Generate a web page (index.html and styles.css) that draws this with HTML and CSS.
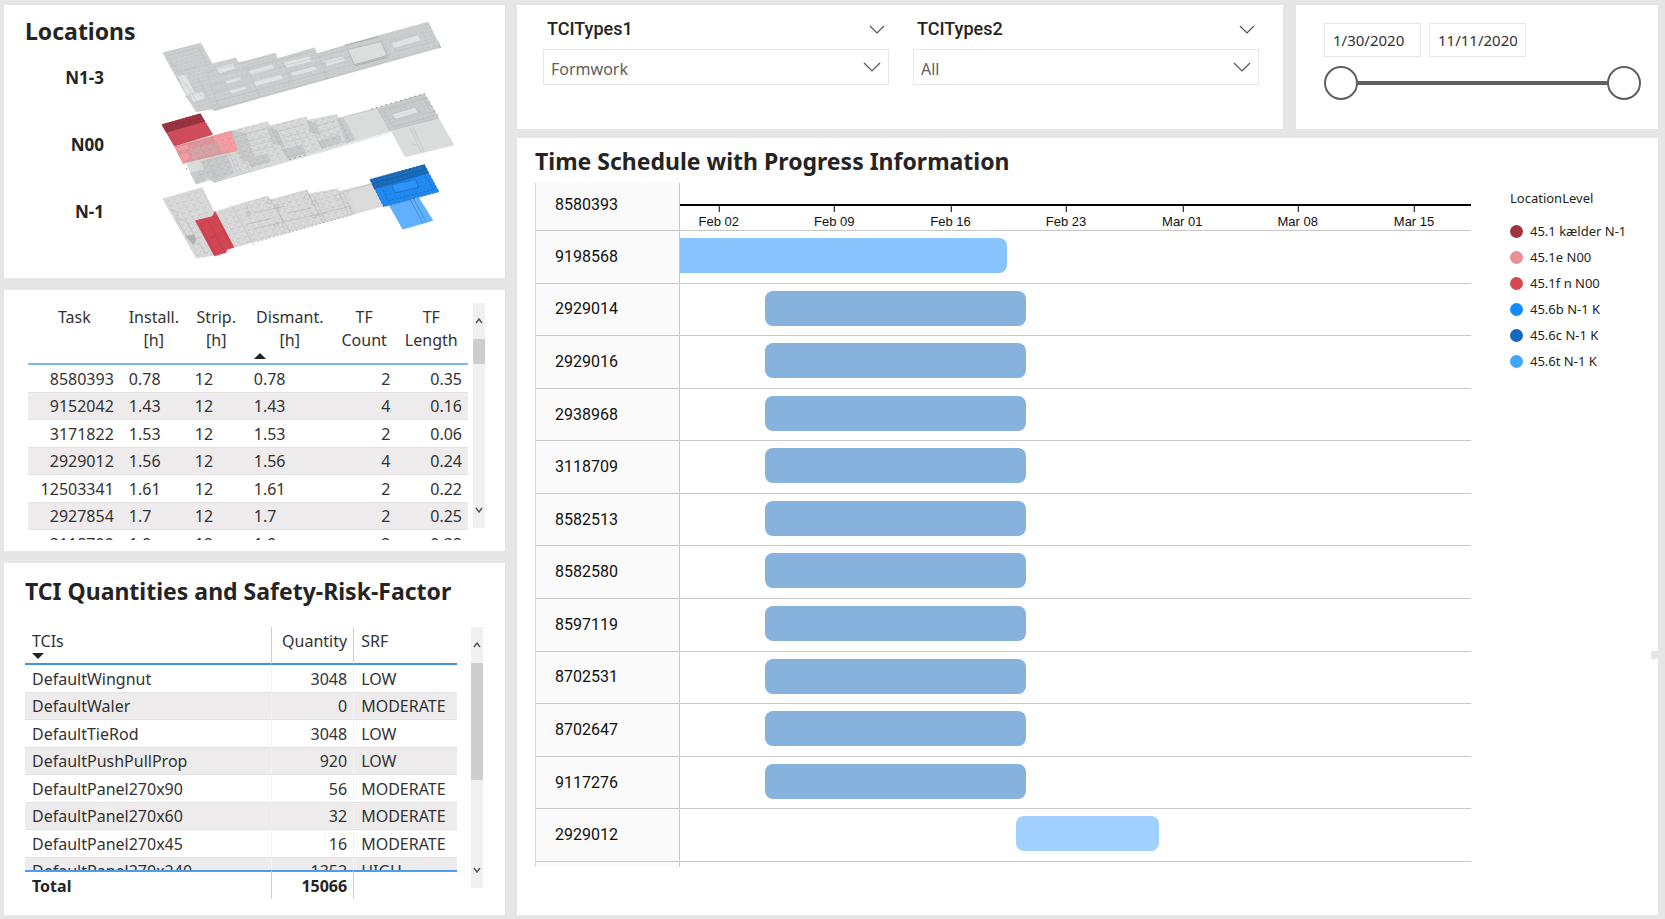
FILE: index.html
```html
<!DOCTYPE html>
<html lang="en">
<head>
<meta charset="utf-8">
<title>Formwork schedule dashboard</title>
<link rel="stylesheet" href="styles.css">
</head>
<body>
<main class="page">
  <div class="side">
    <section class="panel locations">
      <div class="loc-text">
        <h2 class="title">Locations</h2>
        <ul class="levels">
          <li>N1-3</li>
          <li>N00</li>
          <li>N-1</li>
        </ul>
      </div>
      <svg class="plans" viewBox="450 60 930 729" role="img" aria-label="Building levels">
        <defs>
          <pattern id="rooms" width="21" height="17" patternUnits="userSpaceOnUse" patternTransform="matrix(1 -0.27 0.5 0.87 0 0)">
            <path d="M0 3H14M4 3V9M11 3V7M0 13H6M17 9V16" fill="none" stroke="#777" stroke-opacity=".3" stroke-width="1.5"/>
          </pattern>
          <pattern id="fine" width="15" height="23" patternUnits="userSpaceOnUse" patternTransform="matrix(1 -0.27 0.5 0.87 0 0)">
            <path d="M0 4H10M3 4V10M0 15H15M9 15V20" fill="none" stroke="#8d9496" stroke-opacity=".26" stroke-width="1.4"/>
          </pattern>
        </defs>

        <g class="level-top">
          <path fill="#cccfd0" d="M484 159L600 130L634 192L705 174L713 189L824 160L830 176L940 144L948 161L1130 108L1282 67L1320 144L640 335L633 329L585 338L556 290Z"/>
          <path fill="url(#fine)" d="M484 159L600 130L634 192L705 174L713 189L824 160L830 176L940 144L948 161L1130 108L1282 67L1320 144L640 335L633 329L585 338L556 290Z"/>
          <g fill="#e1e2e2">
            <path d="M646 206L695 192L703 207L657 221ZM742 215L812 196L820 207L750 228ZM848 189L925 171L932 185L857 204ZM970 185L1026 170L1032 184L978 199ZM671 244L715 232L720 240L680 252ZM757 246L838 225L846 238L766 259ZM869 219L940 200L948 210L878 229ZM684 274L732 262L738 268L692 281ZM1170 132L1250 108L1259 122L1180 145Z"/>
            <path d="M532 230L555 225L580 280L556 288ZM566 287L605 277L612 298L578 307Z"/>
          </g>
          <path fill="#dcdddd" stroke="#b7b9ba" stroke-width="3" d="M1040 150L1140 126L1158 168L1060 196Z"/>
          <g fill="none" stroke="#b2b7b9" stroke-opacity=".5" stroke-width="2">
            <path d="M622 215L735 187M625 232L960 150M632 255L1035 151M642 277L1060 168M645 306L1163 168M640 331L1318 142M1032 137L1132 112L1163 174L1062 200ZM1138 108L1166 170M1165 124L1265 98L1280 132L1185 155ZM1272 72L1305 138M500 168L592 144L622 205M505 176L555 260M520 190L610 300M540 215L588 200M556 255L600 330M590 235L635 325M615 215L655 330M738 196L775 290M840 172L880 268M950 161L980 240M862 240L870 268M968 212L978 240"/>
          </g>
          <path fill="none" stroke="#a9acad" stroke-width="3" d="M1032 137L1132 112M1064 198L1160 173"/>
          <path fill="none" stroke="#555" stroke-width="2.5" stroke-dasharray="3 5" d="M1312 130L1319 144L1314 147M556 290L562 297"/>
        </g>

        <g class="level-middle">
          <path fill="#dadbdb" d="M545 470L690 393L800 365L806 378L915 351L921 361L1007 344L1013 355L1130 324L1270 282L1314 356L1360 437L1212 473L1170 395L640 549L628 542L585 556Z"/>
          <path fill="#c9cccd" d="M1127 326L1270 282L1314 356L1166 394ZM600 485L680 465L700 520L640 549L618 535ZM690 394L735 400L760 470L725 490L700 440ZM795 382L828 390L850 440L815 432ZM918 362L945 370L960 405L925 400ZM1006 356L1028 352L1064 420L1036 432ZM735 478L800 462L810 486L752 504ZM840 450L905 434L914 462L862 476ZM950 424L1015 406L1024 430L962 448ZM566 520L610 510L616 540L585 554Z"/>
          <path fill="url(#rooms)" d="M600 470L690 393L800 365L806 378L915 351L921 361L1007 344L1060 420L640 549L628 542L585 556Z"/>
          <path fill="url(#fine)" d="M1127 326L1270 282L1314 356L1166 394Z"/>
          <path fill="#e0e1e1" stroke="#b6baba" stroke-width="2" d="M1172 344L1242 323L1252 340L1184 359Z"/>
          <g fill="none" stroke="#a9adae" stroke-opacity=".5" stroke-width="2">
            <path d="M708 410L792 388M738 426L792 412M740 442L812 424M745 458L820 440M830 397L915 375M846 414L915 397M850 430L925 410M950 378L1002 364M958 398L1000 386M970 414L1018 400M604 486L686 464L708 520M620 486L650 546M700 470L722 520M718 450L745 515M806 378L862 478M825 395L865 475M921 361L965 446M940 380L975 442M1013 355L1045 425M1030 352L1130 326M1130 328L1166 394L1312 356M1144 336L1268 298L1298 350L1178 382ZM1228 386L1262 460M1236 384L1270 458M1232 438L1248 434M740 500L800 484M860 475L918 458M640 548L1166 400"/>
          </g>
          <path fill="none" stroke="#555" stroke-opacity=".7" stroke-width="2.5" stroke-dasharray="5 10" d="M1110 329L1270 282L1314 356M865 480L920 464M548 492L558 510"/>
          <path fill="#d24a59" d="M482 375L598 342L636 406L520 441Z"/>
          <path fill="#9b2f3d" d="M482 375L598 342L612 366L496 400Z"/>
          <path fill="#e0959c" d="M520 441L690 394L711 454L545 492Z"/>
          <path fill="#f79da3" d="M636 410L690 394L711 454L660 460ZM524 444L556 436L563 448L534 456ZM532 468L562 460L566 476L548 490Z"/>
          <path fill="#d6a3a8" d="M565 448L650 426L660 458L574 482Z"/>
          <path fill="url(#rooms)" d="M482 375L598 342L636 406L690 394L711 454L545 492Z"/>
          <path fill="none" stroke="#8f2a38" stroke-width="2" stroke-dasharray="6 4" stroke-opacity=".8" d="M484 375L598 343L634 404M486 380L520 438M494 384L600 355"/>
        </g>

        <g class="level-bottom">
          <path fill="#dbdbdb" d="M484 597L604 563L640 637L800 588L807 600L917 570L924 582L1008 567L1014 575L1120 548L1148 620L700 745L640 768L585 777Z"/>
          <path fill="url(#rooms)" d="M484 597L604 563L640 637L800 588L807 600L917 570L924 582L1008 567L1040 574L1064 640L700 745L640 768L585 777Z"/>
          <g fill="none" stroke="#a3a6a7" stroke-opacity=".6" stroke-width="2">
            <path d="M505 630L530 640L528 656L556 664L582 712M525 658L568 725M556 712L578 706L584 716L600 714M566 724L600 738L612 760M690 616L760 740M735 610L745 650M800 590L870 700M830 620L850 690M917 572L965 670M940 590L972 662M1012 574L1044 650M1024 572L1056 646M738 674L812 656M755 690L1050 620M860 640L930 626M760 640L850 620M1030 576L1118 552M940 650L980 640"/>
            <circle cx="742" cy="643" r="7"/><circle cx="805" cy="606" r="7"/><circle cx="828" cy="620" r="7"/><circle cx="918" cy="592" r="8"/><circle cx="938" cy="610" r="7"/><circle cx="1012" cy="592" r="8"/><circle cx="938" cy="650" r="6"/><circle cx="826" cy="676" r="7"/>
          </g>
          <path fill="#aeb1b2" d="M554 710L578 706L586 722L576 736Z"/>
          <path fill="none" stroke="#999" stroke-width="2" stroke-dasharray="5 7" d="M770 726L1060 644"/>
          <path fill="#d24553" d="M582 663L634 650L642 634L700 744L678 750L676 760L640 770Z"/>
          <path fill="none" stroke="#98303d" stroke-width="2" stroke-opacity=".45" d="M634 650L650 654L690 742M596 668L640 762M620 664L668 752M628 714L644 710"/>
          <path fill="#60b0ff" d="M1163 616L1254 594L1297 664L1205 690Z"/>
          <path fill="none" stroke="#4489cc" stroke-width="2.5" d="M1228 600L1266 672M1238 598L1276 668"/>
          <path fill="#1b88f4" d="M1107 540L1270 495L1314 577L1148 622Z"/>
          <path fill="#1668ba" d="M1107 540L1270 495L1283 521L1120 570Z"/>
          <path fill="url(#fine)" d="M1107 540L1270 495L1314 577L1148 622Z"/>
          <path fill="#2f94f8" stroke="#1466b6" stroke-width="2" d="M1172 556L1244 540L1252 564L1182 580Z"/>
          <path fill="none" stroke="#155da5" stroke-width="2" stroke-dasharray="7 5" d="M1107 540L1270 495L1314 577L1148 622ZM1116 550L1262 512L1272 498M1262 512L1300 572M1142 560L1160 604L1298 570"/>
        </g>
      </svg>
    </section>

    <section class="panel tasks">
      <div class="viewport">
        <table class="grid task-table">
          <colgroup><col class="c-task"><col class="c-inst"><col class="c-strip"><col class="c-dis"><col class="c-count"><col class="c-len"></colgroup>
          <thead>
            <tr>
              <th scope="col">Task</th>
              <th scope="col">Install.<br>[h]</th>
              <th scope="col">Strip.<br>[h]</th>
              <th scope="col" aria-sort="ascending">Dismant.<br>[h]<svg class="sort" viewBox="0 0 12 6"><path d="M0 6L6 0L12 6Z"/></svg></th>
              <th scope="col">TF<br>Count</th>
              <th scope="col">TF<br>Length</th>
            </tr>
          </thead>
          <tbody>
            <tr><td>8580393</td><td>0.78</td><td>12</td><td>0.78</td><td>2</td><td>0.35</td></tr>
            <tr><td>9152042</td><td>1.43</td><td>12</td><td>1.43</td><td>4</td><td>0.16</td></tr>
            <tr><td>3171822</td><td>1.53</td><td>12</td><td>1.53</td><td>2</td><td>0.06</td></tr>
            <tr><td>2929012</td><td>1.56</td><td>12</td><td>1.56</td><td>4</td><td>0.24</td></tr>
            <tr><td>12503341</td><td>1.61</td><td>12</td><td>1.61</td><td>2</td><td>0.22</td></tr>
            <tr><td>2927854</td><td>1.7</td><td>12</td><td>1.7</td><td>2</td><td>0.25</td></tr>
            <tr><td>3118709</td><td>1.9</td><td>12</td><td>1.9</td><td>2</td><td>0.38</td></tr>
          </tbody>
        </table>
      </div>
      <div class="scrollbar task-scroll">
        <button class="arrow" aria-label="Scroll up"><svg viewBox="0 0 8 6"><path d="M1 5L4 1L7 5"/></svg></button>
        <span class="thumb"></span>
        <button class="arrow" aria-label="Scroll down"><svg viewBox="0 0 8 6"><path d="M1 1L4 5L7 1"/></svg></button>
      </div>
    </section>

    <section class="panel quantities">
      <h2 class="title">TCI Quantities and Safety-Risk-Factor</h2>
      <div class="qty-body">
        <div class="viewport">
          <table class="grid qty-table">
            <colgroup><col class="c-tci"><col class="c-qty"><col class="c-srf"></colgroup>
            <thead>
              <tr>
                <th scope="col" aria-sort="descending">TCIs<svg class="sort" viewBox="0 0 12 6"><path d="M0 0L6 6L12 0Z"/></svg></th>
                <th scope="col">Quantity</th>
                <th scope="col">SRF</th>
              </tr>
            </thead>
            <tbody>
              <tr><td>DefaultWingnut</td><td>3048</td><td>LOW</td></tr>
              <tr><td>DefaultWaler</td><td>0</td><td>MODERATE</td></tr>
              <tr><td>DefaultTieRod</td><td>3048</td><td>LOW</td></tr>
              <tr><td>DefaultPushPullProp</td><td>920</td><td>LOW</td></tr>
              <tr><td>DefaultPanel270x90</td><td>56</td><td>MODERATE</td></tr>
              <tr><td>DefaultPanel270x60</td><td>32</td><td>MODERATE</td></tr>
              <tr><td>DefaultPanel270x45</td><td>16</td><td>MODERATE</td></tr>
              <tr><td>DefaultPanel270x240</td><td>1352</td><td>HIGH</td></tr>
            </tbody>
            <tfoot>
              <tr><td>Total</td><td>15066</td><td></td></tr>
            </tfoot>
          </table>
        </div>
        <div class="scrollbar qty-scroll">
          <button class="arrow" aria-label="Scroll up"><svg viewBox="0 0 8 6"><path d="M1 5L4 1L7 5"/></svg></button>
          <span class="thumb"></span>
          <button class="arrow" aria-label="Scroll down"><svg viewBox="0 0 8 6"><path d="M1 1L4 5L7 1"/></svg></button>
        </div>
      </div>
    </section>
  </div>

  <div class="content">
    <div class="filters">
      <section class="panel types">
        <div class="slicer">
          <div class="slicer-head">
            <label for="t1">TCITypes1</label>
            <button class="toggle" aria-label="Collapse TCITypes1"><svg viewBox="0 0 16 9"><path d="M1 1L8 8L15 1"/></svg></button>
          </div>
          <div class="select-box">
            <select id="t1"><option>Formwork</option></select>
            <svg viewBox="0 0 18 10"><path d="M1 1L9 9L17 1"/></svg>
          </div>
        </div>
        <div class="slicer">
          <div class="slicer-head">
            <label for="t2">TCITypes2</label>
            <button class="toggle" aria-label="Collapse TCITypes2"><svg viewBox="0 0 16 9"><path d="M1 1L8 8L15 1"/></svg></button>
          </div>
          <div class="select-box">
            <select id="t2"><option>All</option></select>
            <svg viewBox="0 0 18 10"><path d="M1 1L9 9L17 1"/></svg>
          </div>
        </div>
      </section>
      <section class="panel dates">
        <div class="date-row">
          <input type="text" aria-label="Start date" value="1/30/2020">
          <input type="text" aria-label="End date" value="11/11/2020">
        </div>
        <div class="range">
          <input type="range" aria-label="Range start" min="0" max="100" value="0">
          <input type="range" aria-label="Range end" min="0" max="100" value="100">
        </div>
      </section>
    </div>

    <section class="panel schedule">
      <h2 class="title">Time Schedule with Progress Information</h2>
      <div class="chart-area">
        <div class="gantt">
          <div class="row axis-row">
            <span class="id">8580393</span>
            <div class="axis">
              <span class="tick" style="left:4.9%">Feb 02</span>
              <span class="tick" style="left:19.5%">Feb 09</span>
              <span class="tick" style="left:34.2%">Feb 16</span>
              <span class="tick" style="left:48.8%">Feb 23</span>
              <span class="tick" style="left:63.5%">Mar 01</span>
              <span class="tick" style="left:78.1%">Mar 08</span>
              <span class="tick" style="left:92.8%">Mar 15</span>
            </div>
          </div>
          <div class="row"><span class="id">9198568</span><div class="lane"><div class="bar started" style="width:41.4%"></div></div></div>
          <div class="row"><span class="id">2929014</span><div class="lane"><div class="bar" style="margin-left:10.8%;width:32.9%"></div></div></div>
          <div class="row"><span class="id">2929016</span><div class="lane"><div class="bar" style="margin-left:10.8%;width:32.9%"></div></div></div>
          <div class="row"><span class="id">2938968</span><div class="lane"><div class="bar" style="margin-left:10.8%;width:32.9%"></div></div></div>
          <div class="row"><span class="id">3118709</span><div class="lane"><div class="bar" style="margin-left:10.8%;width:32.9%"></div></div></div>
          <div class="row"><span class="id">8582513</span><div class="lane"><div class="bar" style="margin-left:10.8%;width:32.9%"></div></div></div>
          <div class="row"><span class="id">8582580</span><div class="lane"><div class="bar" style="margin-left:10.8%;width:32.9%"></div></div></div>
          <div class="row"><span class="id">8597119</span><div class="lane"><div class="bar" style="margin-left:10.8%;width:32.9%"></div></div></div>
          <div class="row"><span class="id">8702531</span><div class="lane"><div class="bar" style="margin-left:10.8%;width:32.9%"></div></div></div>
          <div class="row"><span class="id">8702647</span><div class="lane"><div class="bar" style="margin-left:10.8%;width:32.9%"></div></div></div>
          <div class="row"><span class="id">9117276</span><div class="lane"><div class="bar" style="margin-left:10.8%;width:32.9%"></div></div></div>
          <div class="row"><span class="id">2929012</span><div class="lane"><div class="bar planned" style="margin-left:42.5%;width:18%"></div></div></div>
          <div class="row tail"><span class="id"></span></div>
        </div>
        <aside class="legend">
          <h3>LocationLevel</h3>
          <ul>
            <li><i class="dot maroon"></i>45.1 kælder N-1</li>
            <li><i class="dot pink"></i>45.1e N00</li>
            <li><i class="dot red"></i>45.1f n N00</li>
            <li><i class="dot blue"></i>45.6b N-1 K</li>
            <li><i class="dot navy"></i>45.6c N-1 K</li>
            <li><i class="dot sky"></i>45.6t N-1 K</li>
          </ul>
        </aside>
      </div>
    </section>
  </div>
</main>
</body>
</html>
```
FILE: styles.css
```css
* { box-sizing: border-box; }

body {
  margin: 0;
  background: #e6e6e6;
  color: #333;
  font: 16px/22px "Noto Sans", "Open Sans", sans-serif;
}

h2, h3, ul { margin: 0; padding: 0; list-style: none; }

button {
  display: flex;
  align-items: center;
  justify-content: center;
  margin: 0;
  padding: 0;
  border: 0;
  background: none;
}

.page {
  display: grid;
  grid-template-columns: 501px minmax(0, 1fr);
  gap: 12px;
  height: 100vh;
  min-height: 760px;
  padding: 5px 7px 4px 4px;
}

.side {
  display: grid;
  grid-template-rows: 273fr 261fr 352fr;
  gap: 12px;
  min-height: 0;
}

.panel { min-width: 0; min-height: 0; background: #fff; }

.title {
  color: #252423;
  font: bold 23px/26px "Noto Sans", "Open Sans", sans-serif;
  white-space: nowrap;
}

/* Locations */
.locations { display: flex; padding: 13px 44px 0 21px; }
.loc-text { width: 126px; }
.levels { padding-right: 47px; }
.levels li {
  color: #252423;
  font-size: 17px;
  font-weight: bold;
  line-height: 67px;
  text-align: right;
}
.plans { flex: 1; min-width: 0; height: 246px; }

/* Tables */
.viewport { flex: 1; min-width: 0; overflow: hidden; }
.grid {
  width: 100%;
  table-layout: fixed;
  border-collapse: separate;
  border-spacing: 0;
}
.grid th { position: relative; font-weight: normal; vertical-align: top; }
.grid td { height: 27px; padding: 0 8px; line-height: 26px; white-space: nowrap; }
.grid tbody tr:nth-child(even) td {
  height: 28px;
  border-top: 1px solid #e4e2e2;
  border-bottom: 1px solid #e4e2e2;
  background: #edebec;
}
.sort { position: absolute; width: 12px; height: 6px; fill: #222; }

.tasks { display: flex; gap: 5px; padding: 13px 20px 11px 24px; }
.task-table th { height: 62px; padding: 3px 0 0; border-bottom: 2px solid #7fb6ea; line-height: 23px; }
.task-table td { text-align: left; }
.task-table td:first-child { padding: 0 7px 0 0; text-align: right; }
.task-table td:nth-child(5) { padding: 0 4px; text-align: right; }
.task-table td:nth-child(6) { padding: 0 6px; text-align: right; }
.task-table .sort { bottom: 4px; left: 8px; }
.c-task { width: 21.1%; }
.c-inst { width: 15%; }
.c-strip { width: 13.4%; }
.c-dis { width: 20%; }
.c-count { width: 13.8%; }
.c-len { width: 16.7%; }

.quantities { display: flex; flex-direction: column; gap: 23px; padding: 15px 22px 16px 21px; }
.qty-body { display: flex; flex: 1; gap: 14px; min-height: 0; }
.qty-table th { height: 38px; padding: 3px 7px 0; border-bottom: 2px solid #3d94dd; text-align: left; }
.qty-table td { padding: 0 7px; }
.qty-table th:nth-child(2), .qty-table td:nth-child(2) {
  padding-right: 6px;
  border-right: 1px solid #edf3f8;
  border-left: 1px solid #edf3f8;
  text-align: right;
}
.qty-table th:nth-child(2), .qty-table tfoot td:nth-child(2) {
  border-right-color: #b3d8f6;
  border-left-color: #b3d8f6;
}
.qty-table tfoot td {
  position: sticky;
  bottom: 0;
  height: 29px;
  border-top: 2px solid #4b9fea;
  background: #fff;
  color: #252423;
  font-weight: bold;
}
.qty-table .sort { bottom: 4px; left: 7px; }
.c-tci { width: 57%; }
.c-qty { width: 19.2%; }
.c-srf { width: 23.8%; }

.scrollbar { display: flex; flex-direction: column; width: 12px; background: #f0f0f0; }
.scrollbar .arrow { height: 36px; }
.scrollbar .arrow svg { width: 8px; height: 6px; fill: none; stroke: #555; stroke-width: 1.5; }
.scrollbar .arrow:last-child { margin-top: auto; }
.scrollbar .thumb { background: #cdcdcd; }
.task-scroll { margin-bottom: 12px; }
.task-scroll .thumb { height: 11%; }
.qty-scroll { margin-bottom: 11px; }
.qty-scroll .thumb { height: 45%; }

/* Filters */
.content { display: grid; grid-template-rows: 124px minmax(0, 1fr); gap: 9px; min-width: 0; min-height: 0; }
.filters { display: grid; grid-template-columns: minmax(0, 766fr) minmax(0, 362fr); gap: 13px; }
.types { display: grid; grid-template-columns: 1fr 1fr; gap: 24px; padding: 12px 24px 0 26px; }
.slicer { display: flex; flex-direction: column; gap: 8px; min-width: 0; }
.slicer-head { display: flex; align-items: center; justify-content: space-between; padding: 0 4px; }
.slicer-head label { color: #252423; font: 500 18px/24px Roboto, sans-serif; }
.toggle svg { width: 16px; height: 9px; }
.toggle svg, .select-box svg { fill: none; stroke: #555; stroke-width: 1.2; }
.select-box { position: relative; }
.select-box select {
  width: 100%;
  height: 36px;
  padding: 4px 7px 0;
  border: 1px solid #e6e6e6;
  border-radius: 0;
  background: #fff;
  color: #605e5c;
  font: inherit;
  appearance: none;
}
.select-box svg { position: absolute; top: 13px; right: 8px; width: 18px; height: 10px; pointer-events: none; }

.dates { display: flex; flex-direction: column; gap: 9px; padding: 18px 17px 0 28px; }
.date-row { display: flex; gap: 8px; }
.date-row input {
  width: 97px;
  height: 34px;
  padding: 0 8px;
  border: 1px solid #e6e6e6;
  color: #333;
  font: 15px/20px "Noto Sans", "Open Sans", sans-serif;
}
.range { position: relative; height: 34px; }
.range::before {
  content: "";
  position: absolute;
  top: 15px;
  right: 17px;
  left: 17px;
  height: 4px;
  background: #606060;
}
.range input {
  position: absolute;
  width: 100%;
  height: 34px;
  margin: 0;
  background: none;
  pointer-events: none;
  appearance: none;
}
.range input::-webkit-slider-thumb {
  width: 34px;
  height: 34px;
  border: 2px solid #606060;
  border-radius: 50%;
  background: #fff;
  pointer-events: auto;
  appearance: none;
}

/* Schedule */
.schedule { position: relative; display: flex; flex-direction: column; gap: 9px; padding: 10px 0 48px 18px; }
.schedule::after {
  content: "";
  position: absolute;
  top: 66%;
  right: 0;
  width: 7px;
  height: 8px;
  background: #e6e6e6;
}
.chart-area { display: flex; flex: 1; gap: 39px; min-height: 0; }
.gantt { display: flex; flex: 1; flex-direction: column; min-width: 0; }
.row { display: flex; flex: 1; border-bottom: 1px solid #c8c8c8; }
.row.axis-row { flex: 0 0 48px; }
.row.tail { flex: 0 0 5px; border-bottom: 0; }
.id {
  display: flex;
  flex: 0 0 145px;
  align-items: center;
  padding-left: 19px;
  border-right: 1px solid #c8c8c8;
  border-left: 1px solid #d8d8d8;
  background: #fafafa;
  color: #111;
  font: 16px/20px Roboto, sans-serif;
}
.axis-row .id { padding-bottom: 4px; }
.lane { flex: 1; padding-top: 7px; }
.bar { height: 35px; border-radius: 8px; background: #88b2de; }
.bar.started { border-radius: 0 8px 8px 0; background: #8ac4ff; }
.bar.planned { background: #a1d0ff; }
.axis { position: relative; flex: 1; margin-top: 21px; border-top: 2px solid #000; }
.tick {
  position: absolute;
  top: 0;
  padding-top: 8px;
  color: #111;
  font: 13px/16px "Liberation Sans", Arial, sans-serif;
  white-space: nowrap;
  transform: translateX(-50%);
}
.tick::before {
  content: "";
  position: absolute;
  top: 0;
  left: 50%;
  width: 1px;
  height: 6px;
  background: #000;
}

.legend { width: 148px; padding-top: 5px; color: #252423; font-size: 13px; line-height: 20px; white-space: nowrap; }
.legend h3 { font-size: 13px; font-weight: normal; }
.legend ul { padding-top: 10px; }
.legend li { display: flex; align-items: center; gap: 7px; height: 26px; }
.dot { width: 13px; height: 13px; border-radius: 50%; }
.maroon { background: #a0343f; }
.pink { background: #e88f97; }
.red { background: #d64550; }
.blue { background: #118dff; }
.navy { background: #1069be; }
.sky { background: #41a4ff; }
```
